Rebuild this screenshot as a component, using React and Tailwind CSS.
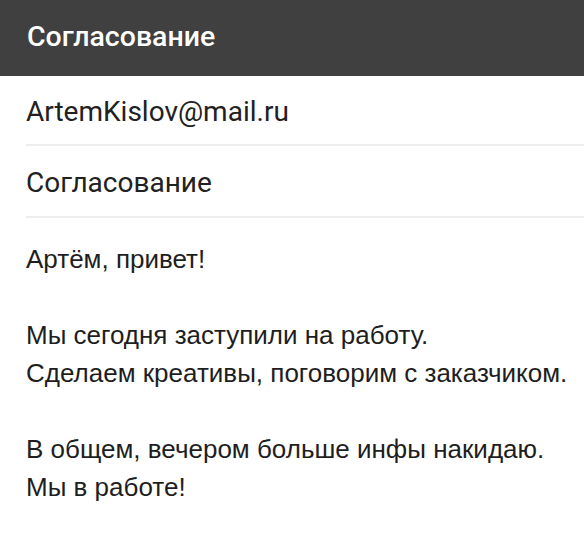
export default function App() {
  return (
    <div className="w-[584px] h-[540px] bg-white overflow-hidden">
      <div className="h-[76px] bg-[#404040] flex items-center pl-[27px] pb-[1px]">
        <span className="text-white text-[28.5px] font-medium" style={{ fontFamily: "Roboto, sans-serif" }}>Согласование</span>
      </div>
      <div className="pl-[26px]" style={{ fontFamily: "Roboto, sans-serif" }}>
        <div className="h-[70px] flex items-center pt-[3px] border-b-2 border-[#eeeeee] text-[28px] text-[#212121]">
          ArtemKislov@mail.ru
        </div>
        <div className="h-[72px] flex items-center pt-[4px] border-b-2 border-[#eeeeee] text-[28px] text-[#212121]">
          Согласование
        </div>
      </div>
      <div className="pl-[26px] pt-[22px] text-[26px] leading-[38px] text-[#1e1e1e]" style={{ fontFamily: "'Liberation Sans', Arial, sans-serif" }}>
        <div>Артём, привет!</div>
        <div>&nbsp;</div>
        <div>Мы сегодня заступили на работу.</div>
        <div>Сделаем креативы, поговорим с заказчиком.</div>
        <div>&nbsp;</div>
        <div>В общем, вечером больше инфы накидаю.</div>
        <div>Мы в работе!</div>
      </div>
    </div>
  );
}
